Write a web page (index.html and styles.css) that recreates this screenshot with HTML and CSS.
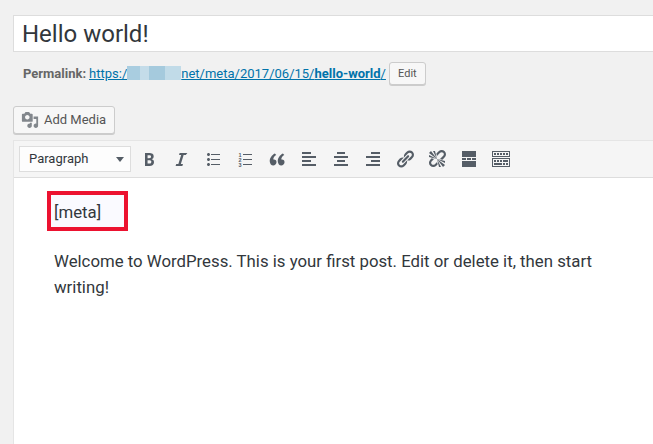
FILE: index.html
```html
<!DOCTYPE html>
<html lang="en">
<head>
<meta charset="utf-8">
<title>Edit Post</title>
<link rel="stylesheet" href="styles.css">
</head>
<body>
<main class="page">
  <div class="title-box">Hello world!</div>
  <div class="permalink">
    <strong class="permalink-label">Permalink:</strong>
    <a class="permalink-url" href="#">https:/<span class="blur"></span>net/meta/2017/06/15/<b>hello-world</b>/</a>
    <button class="btn btn-small">Edit</button>
  </div>
  <button class="btn btn-media">
    <svg class="media-icon" viewBox="0 0 20 20"><path d="M13 11V4c0-.55-.45-1-1-1h-1.67L9 1H5L3.67 3H2c-.55 0-1 .45-1 1v7c0 .55.45 1 1 1h10c.55 0 1-.45 1-1zM7 4.5c1.38 0 2.5 1.12 2.5 2.5S8.38 9.5 7 9.5 4.5 8.38 4.5 7 5.62 4.5 7 4.5zM14 6h5v10.5c0 1.38-1.12 2.5-2.5 2.5S14 17.88 14 16.5s1.12-2.5 2.5-2.5c.17 0 .34.02.5.05V9h-3V6zm-4 8.05V13h2v3.5c0 1.38-1.12 2.5-2.5 2.5S7 17.88 7 16.5 8.12 14 9.5 14c.17 0 .34.02.5.05z"/></svg>
    Add Media
  </button>
  <section class="editor">
    <div class="toolbar">
      <div class="format-select">Paragraph<span class="caret"></span></div>
      <div class="tools">
        <span class="tool"><svg viewBox="0 0 20 20"><path fill-rule="evenodd" d="M6 4v13h4.54c1.37 0 2.46-.33 3.26-1 .8-.66 1.2-1.58 1.2-2.77 0-.84-.17-1.51-.51-2.01s-.9-.85-1.67-1.03v-.09c.57-.1 1.02-.4 1.36-.9s.51-1.13.51-1.91c0-1.14-.39-1.98-1.17-2.5C12.75 4.26 11.5 4 9.78 4H6zm2.57 5.15V6.26h1.36c.73 0 1.27.11 1.61.32.34.22.51.58.51 1.07 0 .54-.16.92-.47 1.15s-.82.35-1.51.35h-1.5zm0 2.19h1.6c1.44 0 2.16.5 2.16 1.52 0 .57-.17 1-.51 1.29s-.86.44-1.57.44H8.57v-3.25z"/></svg></span>
        <span class="tool"><svg viewBox="0 0 20 20"><path d="M14.78 6h-2.13l-2.8 9h2.12l-.62 2H4.6l.62-2h2.14l2.8-9H8.03l.62-2h7.75z"/></svg></span>
        <span class="tool"><svg viewBox="0 0 20 20"><path d="M5.5 7C4.67 7 4 6.33 4 5.5 4 4.68 4.67 4 5.5 4 6.32 4 7 4.68 7 5.5 7 6.33 6.32 7 5.5 7zM8 5h9v1H8V5zm-2.5 7c-.83 0-1.5-.67-1.5-1.5C4 9.68 4.67 9 5.5 9c.82 0 1.5.68 1.5 1.5 0 .83-.68 1.5-1.5 1.5zM8 10h9v1H8v-1zm-2.5 7c-.83 0-1.5-.67-1.5-1.5 0-.82.67-1.5 1.5-1.5.82 0 1.5.68 1.5 1.5 0 .83-.68 1.5-1.5 1.5zM8 15h9v1H8v-1z"/></svg></span>
        <span class="tool"><svg viewBox="0 0 20 20"><path d="M8 5h9v1H8zM8 10h9v1H8zM8 15h9v1H8z"/><text class="ol-num" x="3.6" y="7.6">1</text><text class="ol-num" x="3.6" y="12.6">2</text><text class="ol-num" x="3.6" y="17.6">3</text></svg></span>
        <span class="tool"><svg viewBox="0 0 20 20"><path d="M9.49 13.22c0-.74-.2-1.38-.61-1.9-.62-.78-1.83-.88-2.53-.72-.29-1.65 1.11-3.75 2.92-4.65L7.88 4.5c-2.9 1.41-5.65 4.8-5.05 8.4.31 1.8 1.4 3.6 3.4 3.6 1.6 0 3.26-1.5 3.26-3.28zm8.03 0c0-.74-.2-1.38-.6-1.9-.63-.78-1.84-.88-2.54-.72-.29-1.65 1.12-3.75 2.93-4.65L15.91 4.5c-2.9 1.41-5.65 4.8-5.05 8.4.32 1.8 1.4 3.6 3.4 3.6 1.6 0 3.26-1.5 3.26-3.28z"/></svg></span>
        <span class="tool"><svg viewBox="0 0 20 20"><path d="M12 5V3H3v2h9zm5 4V7H3v2h14zm-5 4v-2H3v2h9zm5 4v-2H3v2h14z"/></svg></span>
        <span class="tool"><svg viewBox="0 0 20 20"><path d="M14 5V3H6v2h8zm3 4V7H3v2h14zm-3 4v-2H6v2h8zm3 4v-2H3v2h14z"/></svg></span>
        <span class="tool"><svg viewBox="0 0 20 20"><path d="M17 5V3H8v2h9zm0 4V7H3v2h14zm0 4v-2H8v2h9zm0 4v-2H3v2h14z"/></svg></span>
        <span class="tool"><svg viewBox="0 0 20 20"><path d="M17.74 2.76c1.68 1.69 1.68 4.41 0 6.1l-1.53 1.52c-1.12 1.12-2.7 1.47-4.14 1.09l2.62-2.61.76-.77.76-.76c.84-.84.84-2.2 0-3.04-.84-.85-2.2-.85-3.04 0l-.77.76-3.38 3.38c-.37-1.44-.02-3.02 1.1-4.14l1.52-1.53c1.69-1.68 4.42-1.68 6.1 0zM8.59 13.43l5.34-5.34c.42-.42.42-1.1 0-1.52-.44-.43-1.13-.39-1.53 0l-5.33 5.34c-.42.42-.42 1.1 0 1.52.44.43 1.13.39 1.52 0zm-.76 2.29l4.14-4.15c.38 1.44.03 3.02-1.09 4.14l-1.52 1.53c-1.69 1.68-4.41 1.68-6.1 0-1.68-1.68-1.68-4.42 0-6.1l1.53-1.52c1.12-1.12 2.7-1.47 4.14-1.1l-4.14 4.15c-.85.84-.85 2.2 0 3.05.84.84 2.2.84 3.04 0z"/></svg></span>
        <span class="tool"><svg viewBox="0 0 20 20"><path d="M17.74 2.26c1.68 1.69 1.68 4.41 0 6.1l-1.53 1.52c-.32.33-.69.58-1.08.77L13 10l1.69-1.64.76-.77.76-.76c.84-.84.84-2.2 0-3.04-.84-.85-2.2-.85-3.04 0l-.77.76-.76.76L10 7l-.65-2.14c.19-.38.44-.75.77-1.07l1.52-1.53c1.69-1.68 4.42-1.68 6.1 0zM2 4l8 6-6-8zm4-2l4 8-2-8H6zM2 6l8 4-8-2V6zm7.36 7.69L10 13l.74 2.35-1.38 1.39c-1.69 1.68-4.41 1.68-6.1 0-1.68-1.68-1.68-4.42 0-6.1l1.39-1.38L7 10l-.69.64-1.52 1.53c-.85.84-.85 2.2 0 3.04.84.85 2.2.85 3.04 0zM18 16l-8-6 6 8zm-4 2l-4-8 2 8h2zm4-4l-8-4 8 2v2z"/></svg></span>
        <span class="tool"><svg viewBox="0 0 20 20"><path d="M3 2h14v6H3zM3 9h4v2H3zM8 9h4v2H8zM13 9h4v2h-4zM3 12h14v6H3z"/></svg></span>
        <span class="tool"><svg viewBox="0 0 20 20"><path fill-rule="evenodd" d="M19 2v6H1V2h18zm-1 5V3H2v4h16zM5 4v2H3V4h2zm3 0v2H6V4h2zm3 0v2H9V4h2zm3 0v2h-2V4h2zm3 0v2h-2V4h2zm2 5v9H1V9h18zm-1 8v-7H2v7h16zM5 11v2H3v-2h2zm3 0v2H6v-2h2zm3 0v2H9v-2h2zm6 0v2h-5v-2h5zm-6 3v2H3v-2h8zm3 0v2h-2v-2h2zm3 0v2h-2v-2h2z"/></svg></span>
      </div>
    </div>
    <div class="content">
      <p class="shortcode">[meta]</p>
      <p class="body-text">Welcome to WordPress. This is your first post. Edit or delete it, then start writing!</p>
    </div>
  </section>
</main>
</body>
</html>
```
FILE: styles.css
```css
* { box-sizing: border-box; }
html, body { margin: 0; height: 100%; overflow: hidden; }
body {
  background: #f1f1f1;
  font-family: Roboto, "Noto Sans", sans-serif;
  color: #32373c;
}
.page {
  height: 444px;
  padding: 15px 0 0 13px;
  display: flex;
  flex-direction: column;
  align-items: flex-start;
}
.title-box {
  width: 100%;
  height: 37px;
  border: 1px solid #ddd;
  border-right: 0;
  background: #fff;
  padding: 0 8px;
  font-size: 24px;
  line-height: 36px;
  color: #32373c;
}
.permalink {
  height: 26px;
  margin-top: 8px;
  padding-left: 10px;
  display: flex;
  align-items: center;
  font-size: 13px;
  color: #666;
  white-space: pre;
}
.permalink-label { margin-right: 3px; }
.permalink-url { color: #0073aa; text-decoration: underline; }
.blur {
  display: inline-block;
  width: 54px;
  height: 14px;
  vertical-align: -2px;
  background: linear-gradient(90deg, #a9cde0 0 24%, #c4dce9 24% 40%, #a5cadd 40% 70%, #c1dbe8 70% 100%);
}
.btn {
  display: inline-flex;
  align-items: center;
  font-family: inherit;
  background: #f7f7f7;
  border: 1px solid #ccc;
  border-radius: 3px;
  box-shadow: 0 1px 0 #ccc;
  color: #555;
  padding: 0;
}
.btn-small {
  width: 37px;
  height: 23px;
  margin-left: 3px;
  justify-content: center;
  font-size: 11px;
}
.btn-media {
  width: 102px;
  height: 28px;
  margin-top: 20px;
  padding: 0 0 1px 7px;
  font-size: 13px;
  gap: 5px;
}
.media-icon { width: 18px; height: 18px; fill: #82878c; flex: none; }
.editor {
  flex: 1;
  width: 100%;
  margin-top: 6px;
  background: #fff;
  border: 1px solid #e5e5e5;
  border-width: 1px 0 0 1px;
  display: flex;
  flex-direction: column;
}
.toolbar {
  height: 37px;
  flex: none;
  background: #f5f5f5;
  border-bottom: 1px solid #ddd;
  padding-left: 5px;
  display: flex;
  align-items: center;
}
.format-select {
  width: 112px;
  height: 26px;
  background: #fdfdfd;
  border: 1px solid #ddd;
  padding-left: 9px;
  position: relative;
  font-size: 13px;
  line-height: 24px;
  color: #32373c;
}
.caret {
  position: absolute;
  right: 6px;
  top: 10px;
  border-left: 4px solid transparent;
  border-right: 4px solid transparent;
  border-top: 5px solid #555d66;
}
.tools { display: flex; margin-left: 2px; }
.tool {
  width: 32px;
  height: 30px;
  display: flex;
  align-items: center;
  justify-content: center;
}
.tool svg { width: 20px; height: 20px; fill: #555d66; }
.ol-num {
  font-family: "Liberation Sans", sans-serif;
  font-size: 5.5px;
  font-weight: 700;
  fill: #555d66;
}
.content {
  padding: 13px 0 0 40px;
  font-size: 16.8px;
  line-height: 26px;
  color: #32373c;
}
.content p { margin: 0; }
.shortcode {
  width: 81px;
  height: 40px;
  margin-left: -7px !important;
  padding: 4px 0 0 3px;
  border: 4px solid #ec1230;
  background: #fafaff;
}
.body-text { width: 570px; margin-top: 17px !important; }
```
